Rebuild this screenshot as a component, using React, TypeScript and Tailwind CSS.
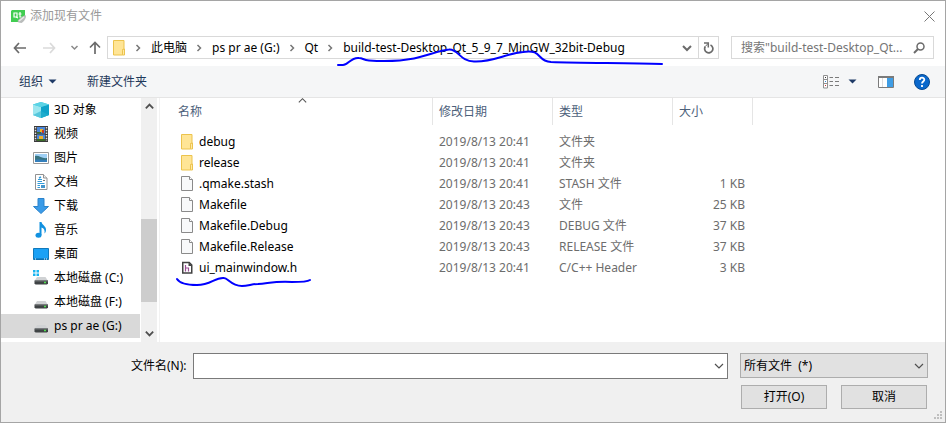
import type { ReactNode } from "react";

function QtIcon() {
  return (
    <svg width="16" height="14" viewBox="0 0 16 14" className="shrink-0">
      <path d="M2 1h13v8l-4 4H1V2z" fill="#41cd52" />
      <path d="M4 4h3v4H4z" fill="none" stroke="#fff" strokeWidth="1.2" />
      <path d="M6 8l2 1M10 3v5h1.500M8.500 5h3" fill="none" stroke="#fff" strokeWidth="1.200" />
      <path d="M15.500 6c-1 0-7 4-8 6l1 1.500 3 .5c2-1 3.500-3 4.500-6z" fill="#b9bcbb" />
      <path d="M14 8l-5 4" stroke="#e9ebea" strokeWidth="1.500" />
    </svg>
  );
}

function FolderIcon() {
  return (
    <svg width="14" height="17" viewBox="0 0 14 17" className="shrink-0">
      <path d="M1.500 1.500h10.500v9h-1.500v5.500h-9z" fill="#ffe596" stroke="#ecc34c" />
      <path d="M10.500 15.500v-4l1-1.500h1v6h-2z" fill="#ffe9a6" stroke="#ecc34c" />
    </svg>
  );
}

function PageIcon() {
  return (
    <svg width="14" height="17" viewBox="0 0 14 17" className="shrink-0">
      <path d="M1.500 1.500h8l3 3v11h-11z" fill="#f8f9fa" stroke="#8a8a8a" />
      <path d="M9.500 1.500v3h3" fill="#fff" stroke="#8a8a8a" />
    </svg>
  );
}

function HeaderIcon() {
  return (
    <svg width="14" height="17" viewBox="0 0 14 17" className="shrink-0">
      <path d="M2.750 3.500h6.500l2.500 2.500v8h-9z" fill="#fff" stroke="#424242" strokeWidth="1.500" />
      <path d="M8.500 3v4H12z" fill="#424242" />
      <path d="M5.500 6v6.500M5.500 9h3v3.500" fill="none" stroke="#9b4f96" strokeWidth="1.200" />
    </svg>
  );
}

function Chevron({ dir, className, size = 12, weight = 2 }: { dir: "down" | "up" | "right"; className?: string; size?: number; weight?: number }) {
  const d = { down: "M2 4l4 4 4-4", up: "M2 8l4-4 4 4", right: "M4.500 3l3 3-3 3" }[dir];
  return (
    <svg width={size} height={size} viewBox="0 0 12 12" className={className}>
      <path d={d} fill="none" stroke="currentColor" strokeWidth={weight} />
    </svg>
  );
}

function Caret() {
  return (
    <svg width="9" height="5" viewBox="0 0 9 5">
      <path d="M0.500 0.500h8l-4 4z" fill="#1e3a66" />
    </svg>
  );
}

function Drive({ system = false }: { system?: boolean }) {
  return (
    <>
      <path d="M4 7h8.500l2.500 4H1.500z" fill="#d0d2d4" />
      <path d="M1.500 10.500h13.500v3l-1 1H2.500l-1-1z" fill="#3f4345" />
      <path d="M2 11h13" stroke="#6b6f71" />
      <path d="M11 12.500h2" stroke="#4fe04f" strokeWidth="1.500" />
      {system && <path d="M0 0h2.500v2.500H0zM3.500 0H6v2.500H3.500zM0 3.500h2.500V6H0zM3.500 3.500H6V6H3.500z" fill="#19b4f0" />}
    </>
  );
}

const places: { name: string; icon: ReactNode; selected?: boolean }[] = [
  {
    name: "3D 对象",
    icon: (
      <>
        <path d="M8 0l8 2.500v10.500l-8 3-8-3V2.500z" fill="#35c3dc" />
        <path d="M0 2.500L8 5v11l-8-3z" fill="#9be6ef" />
        <path d="M8 5l8-2.500V13l-8 3z" fill="#0fa3c9" />
        <path d="M0 2.500L8 0l8 2.500L8 5z" fill="#5bd3e5" />
        <path d="M0 13l8-4 8 4-8 3z" fill="#28b3cf" opacity=".6" />
      </>
    ),
  },
  {
    name: "视频",
    icon: (
      <>
        <path d="M1 0h14v16H1z" fill="#3a3a3a" />
        <path d="M2.500 1v14M13.500 1v14" stroke="#e2e2e2" strokeWidth="1.500" strokeDasharray="1.500 1.200" />
        <path d="M4 1h8v6.500H4zM4 8.500h8V15H4z" fill="#4b86d9" />
        <path d="M7 3h3v3H7z" fill="#f0b429" />
        <path d="M9 4h2v3H9z" fill="#c93b25" />
        <path d="M4 6h4v1.500H4zM4 13h8v2H4z" fill="#3b6b2b" />
        <path d="M6 10h4v3H6z" fill="#efb12b" />
      </>
    ),
  },
  {
    name: "图片",
    icon: (
      <>
        <path d="M.5 2.500h15v11H.5z" fill="#fff" stroke="#999" />
        <path d="M2 4h12v8H2z" fill="#9fd0f5" />
        <path d="M2 6c4-1 7 3 12 2v4H2z" fill="#387481" />
        <path d="M2 10c4-1 8 0 12 0v2H2z" fill="#347fbb" />
      </>
    ),
  },
  {
    name: "文档",
    icon: (
      <>
        <path d="M2.500.500h8l3.500 3.500v11.500H2.500z" fill="#fff" stroke="#929292" />
        <path d="M10.500.500v3.500H14" fill="#eee" stroke="#929292" />
        <path d="M5 5.500h4M4.500 7.500H9M4.500 9.500h7M4.500 11.500H7M4.500 13.500H7" stroke="#319bda" />
        <path d="M6 4l2-1" stroke="#319bda" strokeWidth="1.500" />
        <path d="M8 11h4v3H8z" fill="#4596cd" />
        <path d="M10 6.500h2" stroke="#777" />
      </>
    ),
  },
  {
    name: "下载",
    icon: <path d="M5 .5h6v8h4.500L8 15.500.5 8.500H5z" fill="#3a9be8" stroke="#2b83cb" />,
  },
  {
    name: "音乐",
    icon: (
      <>
        <path d="M6.500 0h2c.5 3 4.500 4 4.500 7.500 0 2-.5 3-1.500 4C12 8 11 6 8.500 5.500V13h-2z" fill="#1191e0" />
        <ellipse cx="5.500" cy="13.200" rx="3" ry="2.500" fill="#1191e0" />
      </>
    ),
  },
  {
    name: "桌面",
    icon: (
      <>
        <path d="M.5 2.500h15v11H.5z" fill="#1ba1f5" stroke="#1179bb" />
        <path d="M1 13h14" stroke="#0b66a3" />
        <path d="M2 13h1M11 13h1M13 13h1" stroke="#fff" />
      </>
    ),
  },
  { name: "本地磁盘 (C:)", icon: <Drive system /> },
  { name: "本地磁盘 (F:)", icon: <Drive /> },
  { name: "ps pr ae (G:)", icon: <Drive />, selected: true },
];

const files = [
  { name: "debug", date: "2019/8/13 20:41", type: "文件夹", size: "", icon: <FolderIcon /> },
  { name: "release", date: "2019/8/13 20:41", type: "文件夹", size: "", icon: <FolderIcon /> },
  { name: ".qmake.stash", date: "2019/8/13 20:41", type: "STASH 文件", size: "1 KB", icon: <PageIcon /> },
  { name: "Makefile", date: "2019/8/13 20:43", type: "文件", size: "25 KB", icon: <PageIcon /> },
  { name: "Makefile.Debug", date: "2019/8/13 20:43", type: "DEBUG 文件", size: "37 KB", icon: <PageIcon /> },
  { name: "Makefile.Release", date: "2019/8/13 20:43", type: "RELEASE 文件", size: "37 KB", icon: <PageIcon /> },
  { name: "ui_mainwindow.h", date: "2019/8/13 20:41", type: "C/C++ Header", size: "3 KB", icon: <HeaderIcon />, marked: true },
];

const crumbs = ["此电脑", "ps pr ae (G:)", "Qt", "build-test-Desktop_Qt_5_9_7_MinGW_32bit-Debug"];

const columns = [
  { label: "名称", width: "w-[273px]", indent: "pl-[18px]", sorted: true },
  { label: "修改日期", width: "w-[120px]", indent: "pl-[6px]" },
  { label: "类型", width: "w-[120px]", indent: "pl-[6px]" },
  { label: "大小", width: "w-[80px]", indent: "pl-[6px]" },
];

function TitleBar() {
  return (
    <header className="flex h-[30px] items-center bg-white pl-[9px] pr-[10px]">
      <QtIcon />
      <h1 className="ml-1 flex-1 text-[#999]">添加现有文件</h1>
      <button aria-label="关闭" className="text-[#777]">
        <svg width="11" height="11" viewBox="0 0 11 11">
          <path d="M.5.500l10 10M10.500.500l-10 10" stroke="currentColor" />
        </svg>
      </button>
    </header>
  );
}

function NavigationBar() {
  return (
    <div className="flex h-[35px] items-center bg-white pl-3 pr-[11px] pb-[2px]">
      <div className="flex w-[94px] shrink-0 items-center">
        <button aria-label="后退" className="mr-[17px] text-[#6b6b6b]">
          <svg width="13" height="12" viewBox="0 0 13 12">
            <path d="M6 1L1.500 6 6 11M1.500 6H13" fill="none" stroke="currentColor" strokeWidth="1.700" />
          </svg>
        </button>
        <button aria-label="前进" className="mr-[14px] text-[#dadada]">
          <svg width="13" height="12" viewBox="0 0 13 12">
            <path d="M7 1l4.500 5L7 11M11.500 6H0" fill="none" stroke="currentColor" strokeWidth="1.700" />
          </svg>
        </button>
        <button aria-label="最近的位置" className="mr-[10px] text-[#8a8a8a]">
          <Chevron dir="down" size={9} />
        </button>
        <button aria-label="上移" className="text-[#6b6b6b]">
          <svg width="12" height="13" viewBox="0 0 12 13">
            <path d="M1 6.500l5-5 5 5M6 1.500V13" fill="none" stroke="currentColor" strokeWidth="1.700" />
          </svg>
        </button>
      </div>
      <div className="relative flex h-[23px] min-w-0 flex-1 items-center border border-[#d9d9d9] pl-1">
        <FolderIcon />
        <nav aria-label="地址" className="flex min-w-0 flex-1 items-center">
          {crumbs.map((crumb) => (
            <div key={crumb} className="flex items-center whitespace-nowrap">
              <Chevron dir="right" className="ml-[6px] mr-[7px] text-[#777]" weight={1.5} />
              <button>{crumb}</button>
            </div>
          ))}
        </nav>
        <button aria-label="历史记录" className="mr-1 px-px text-[#6b6b6b]">
          <Chevron dir="down" />
        </button>
        <button aria-label="刷新" className="flex h-full w-5 items-center justify-center border-l border-[#d9d9d9] text-[#6b6b6b]">
          <svg width="11" height="12" viewBox="0 0 11 12">
            <path d="M2.300 4.500A4.100 4.100 0 1 0 7.500 3" fill="none" stroke="currentColor" strokeWidth="1.700" />
            <path d="M1 1h4.300v4.500" fill="none" stroke="currentColor" strokeWidth="1.500" />
            <path d="M5 1.500L2.300 4.500" fill="none" stroke="currentColor" />
          </svg>
        </button>
        <svg width="328" height="20" viewBox="0 0 328 20" className="pointer-events-none absolute left-[228px] top-[11px]">
          <path
            d="M2 17h5c5 0 8-8 16-7 4 0 4 2 10 2.500 15 1 29 1 45-2C90 8 105 2 113 1.500c9-1 11 12 25 12 18 1 32-8 49-9.500 20-3 13 9 28 10 34 1 74 1 111 2"
            fill="none"
            stroke="#0000ff"
            strokeWidth="2"
            strokeLinecap="round"
          />
        </svg>
      </div>
      <label className="ml-3 flex h-[23px] w-[203px] shrink-0 items-center border border-[#d9d9d9] pl-[9px] pr-2">
        <input
          type="text"
          aria-label="搜索"
          placeholder={'搜索"build-test-Desktop_Qt...'}
          className="min-w-0 flex-1 outline-none placeholder:text-[#757575] placeholder:opacity-100"
        />
        <svg width="12" height="12" viewBox="0 0 12 12">
          <circle cx="7.500" cy="4.500" r="3.500" fill="none" stroke="#6b6b6b" strokeWidth="1.500" />
          <path d="M5 7L1 11" stroke="#6b6b6b" strokeWidth="2" />
        </svg>
      </label>
    </div>
  );
}

function Toolbar() {
  return (
    <div className="flex h-8 items-center border-b border-[#e5e5e5] bg-[#f5f6f7] pl-[18px] pr-[15px] text-[#1e395b]">
      <button className="flex items-center gap-[5px]">
        组织
        <Caret />
      </button>
      <button className="ml-[30px]">新建文件夹</button>
      <button aria-label="更改视图" className="ml-auto">
        <svg width="17" height="14" viewBox="0 0 17 14">
          <path d="M.5.500h4v12.500h-4zM.5 4.500h4M.5 8.500h4" fill="#fff" stroke="#909090" />
          <path d="M6.500 2.500H10M12 2.500h4M6.500 6.500H10M12 6.500h4M6.500 10.500H10M12 10.500h4" stroke="#7b7b7b" />
          <path d="M2 2.500h1" stroke="#333" />
          <path d="M2 6.500h1" stroke="#2d8ae0" />
          <path d="M2 10.500h1" stroke="#c33" />
        </svg>
      </button>
      <button aria-label="更多选项" className="ml-2">
        <Caret />
      </button>
      <button aria-label="预览窗格" className="ml-[21px]">
        <svg width="16" height="12" viewBox="0 0 16 12">
          <path d="M.5.500h15v11H.5z" fill="#fff" stroke="#7b7b7b" />
          <path d="M0 1h16" stroke="#7b7b7b" strokeWidth="2" />
          <path d="M4.500 2v9" stroke="#ddd" />
          <path d="M9 2h6v9H9z" fill="#3f9de5" />
        </svg>
      </button>
      <button aria-label="帮助" className="ml-5">
        <svg width="16" height="16" viewBox="0 0 16 16">
          <circle cx="8" cy="8" r="7.500" fill="#0a68cc" stroke="#084a91" />
          <path d="M5.800 6c0-3 4.500-3 4.500-.3C10.300 7.500 8 7.500 8 9.500M8 11v2" fill="none" stroke="#fff" strokeWidth="1.800" />
        </svg>
      </button>
    </div>
  );
}

function PlacesPane() {
  return (
    <aside className="flex w-[159px] shrink-0 border-r border-[#f2f2f2]">
      <ul className="w-[139px] pb-1">
        {places.map((place) => (
          <li key={place.name}>
            <button
              className={
                place.selected
                  ? "flex h-6 w-full items-center gap-[5px] bg-[#d9d9d9] pl-8"
                  : "flex h-6 w-full items-center gap-[5px] pl-8"
              }
            >
              <svg width="16" height="16" viewBox="0 0 16 16" className="shrink-0">
                {place.icon}
              </svg>
              {place.name}
            </button>
          </li>
        ))}
      </ul>
      <div className="ml-px flex w-4 flex-col items-center bg-[#f0f0f0] text-[#505050]">
        <Chevron dir="up" className="my-[3px]" size={11} />
        <div className="mt-[104px] h-[83px] w-full bg-[#cdcdcd]" />
        <Chevron dir="down" className="mb-[3px] mt-auto" size={11} />
      </div>
    </aside>
  );
}

function FileTable() {
  return (
    <main className="min-w-0 flex-1">
      <table className="w-[593px] table-fixed border-collapse text-left text-[#6d6d6d]">
        <thead className="text-[#4c607a]">
          <tr>
            {columns.map((column) => (
              <th key={column.label} className={`p-0 pb-[6px] font-normal ${column.width}`}>
                <div className={`relative flex h-[27px] items-center border-r border-[#e5e5e5] ${column.indent}`}>
                  {column.label}
                  {column.sorted && <Chevron dir="up" size={11} weight={1.2} className="absolute -top-[3px] left-[137px] text-[#555]" />}
                </div>
              </th>
            ))}
          </tr>
        </thead>
        <tbody>
          {files.map((file) => (
            <tr key={file.name} className="h-[21px]">
              <td className="p-0 pl-5 text-black">
                <div className="relative flex items-center gap-[5px]">
                  {file.icon}
                  {file.name}
                  {file.marked && (
                    <svg width="138" height="14" viewBox="0 0 138 14" className="pointer-events-none absolute -left-[5px] top-[16px]">
                      <path
                        d="M2 4c3 5 11 6 20 6 14 0 18-8 27-7 4 0 7 8 18 8 6 0 10-2 16-2 12-1 18-3 34-2 9 0 15 0 18-2"
                        fill="none"
                        stroke="#0000ff"
                        strokeWidth="2"
                        strokeLinecap="round"
                      />
                    </svg>
                  )}
                </div>
              </td>
              <td className="p-0 pl-[6px]">{file.date}</td>
              <td className="p-0 pl-[6px]">{file.type}</td>
              <td className="p-0 pr-2 text-right">{file.size}</td>
            </tr>
          ))}
        </tbody>
      </table>
    </main>
  );
}

function DialogFooter() {
  return (
    <footer className="relative flex-1 bg-[#f0f0f0] pb-[13px] pl-[130px] pr-[17px] pt-[11px]">
      <div className="flex items-start">
        <label htmlFor="filename" className="w-[62px] shrink-0 whitespace-nowrap leading-[26px]">
          文件名(N):
        </label>
        <div className="flex h-[26px] min-w-0 flex-1 items-center border border-[#7a7a7a] bg-white pr-[2px]">
          <input id="filename" type="text" className="min-w-0 flex-1 px-1 outline-none" />
          <button aria-label="显示文件名列表" className="text-[#505050]">
            <Chevron dir="down" weight={1.2} />
          </button>
        </div>
        <div className="relative ml-3 w-[188px] shrink-0">
          <select aria-label="文件类型" className="h-[25px] w-full appearance-none border border-[#adadad] bg-[#e1e1e1] pl-[3px]">
            <option>所有文件&nbsp; (*)</option>
          </select>
          <Chevron dir="down" weight={1.2} className="pointer-events-none absolute right-[3px] top-[7px] text-[#505050]" />
        </div>
      </div>
      <div className="mt-[6px] flex justify-end gap-[14px] pr-px">
        <button className="h-6 w-[86px] border border-[#adadad] bg-[#e1e1e1]">打开(O)</button>
        <button className="h-6 w-[86px] border border-[#adadad] bg-[#e1e1e1]">取消</button>
      </div>
      <svg width="9" height="9" viewBox="0 0 9 9" className="absolute bottom-[2px] right-[2px]">
        <path d="M6 0h2v2H6zM3 3h2v2H3zM6 3h2v2H6zM0 6h2v2H0zM3 6h2v2H3zM6 6h2v2H6z" fill="#bfbfbf" />
      </svg>
    </footer>
  );
}

export default function App() {
  return (
    <div className="flex min-h-screen w-full flex-col border border-[#a5a5a5] bg-white font-['Noto_Sans','Noto_Sans_CJK_SC',sans-serif] text-[12px] leading-[18px] text-black">
      <TitleBar />
      <NavigationBar />
      <Toolbar />
      <div className="flex">
        <PlacesPane />
        <FileTable />
      </div>
      <DialogFooter />
    </div>
  );
}
